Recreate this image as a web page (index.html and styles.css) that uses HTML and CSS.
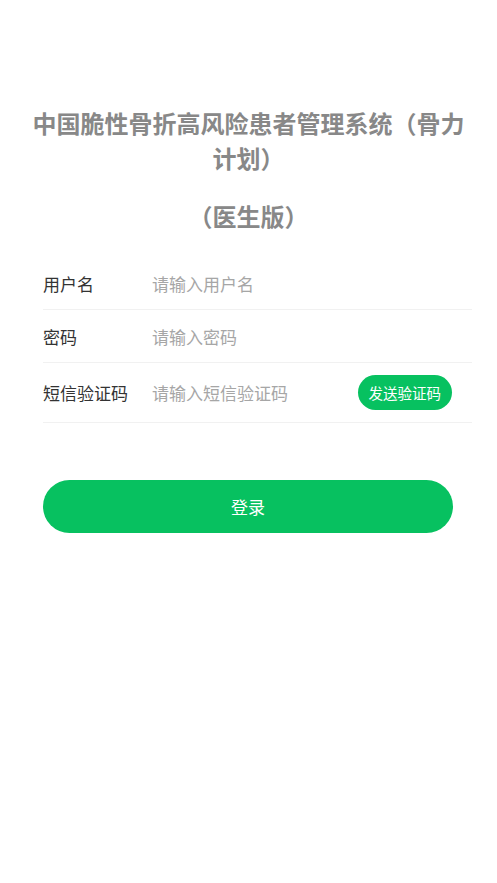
FILE: index.html
```html
<!DOCTYPE html>
<html lang="zh-CN">
<head>
<meta charset="utf-8">
<title>登录</title>
<link rel="stylesheet" href="styles.css">
</head>
<body>
<div class="page">
  <h1 class="title">中国脆性骨折高风险患者管理系统（骨力计划）</h1>
  <h2 class="subtitle">（医生版）</h2>
  <form class="form">
    <div class="row">
      <label class="label">用户名</label>
      <input class="input" type="text" placeholder="请输入用户名">
    </div>
    <div class="row">
      <label class="label">密码</label>
      <input class="input" type="password" placeholder="请输入密码">
    </div>
    <div class="row row-code">
      <label class="label">短信验证码</label>
      <input class="input" type="text" placeholder="请输入短信验证码">
      <button type="button" class="send">发送验证码</button>
    </div>
    <button type="button" class="login">登录</button>
  </form>
</div>
</body>
</html>
```

FILE: styles.css
```css
* { box-sizing: border-box; }
html, body {
  margin: 0;
  padding: 0;
  background: #fff;
}
body {
  font-family: "Noto Sans CJK SC", "Noto Sans", sans-serif;
  width: 497px;
  height: 883px;
}
.page {
  padding: 105px 0 0;
}
.title {
  margin: 0;
  padding: 0 30px;
  text-align: center;
  font-size: 24px;
  line-height: 35px;
  font-weight: 700;
  color: #888;
}
.subtitle {
  margin: 23px 0 0;
  text-align: center;
  font-size: 24px;
  line-height: 35px;
  font-weight: 700;
  color: #888;
}
.form {
  margin: 24px 25px 0 43px;
  display: flex;
  flex-direction: column;
}
.row {
  display: flex;
  align-items: center;
  height: 53px;
  border-bottom: 1px solid #f1f1f1;
}
.row-code {
  height: 60px;
}
.label {
  width: 109px;
  flex: none;
  font-size: 17px;
  color: #333;
}
.input {
  flex: 1;
  min-width: 0;
  border: none;
  outline: none;
  padding: 0;
  font-family: inherit;
  font-size: 17px;
  color: #333;
  background: transparent;
}
.input::placeholder {
  color: #a6a6a6;
}
.send {
  flex: none;
  margin-right: 20px;
  height: 35px;
  padding: 0 11px;
  border: none;
  border-radius: 18px;
  background: #07c160;
  color: #fff;
  font-family: inherit;
  font-size: 14.5px;
}
.login {
  margin-top: 57px;
  width: 410px;
  height: 53px;
  border: none;
  border-radius: 27px;
  background: #07c160;
  color: #fff;
  font-family: inherit;
  font-size: 17px;
}
```
